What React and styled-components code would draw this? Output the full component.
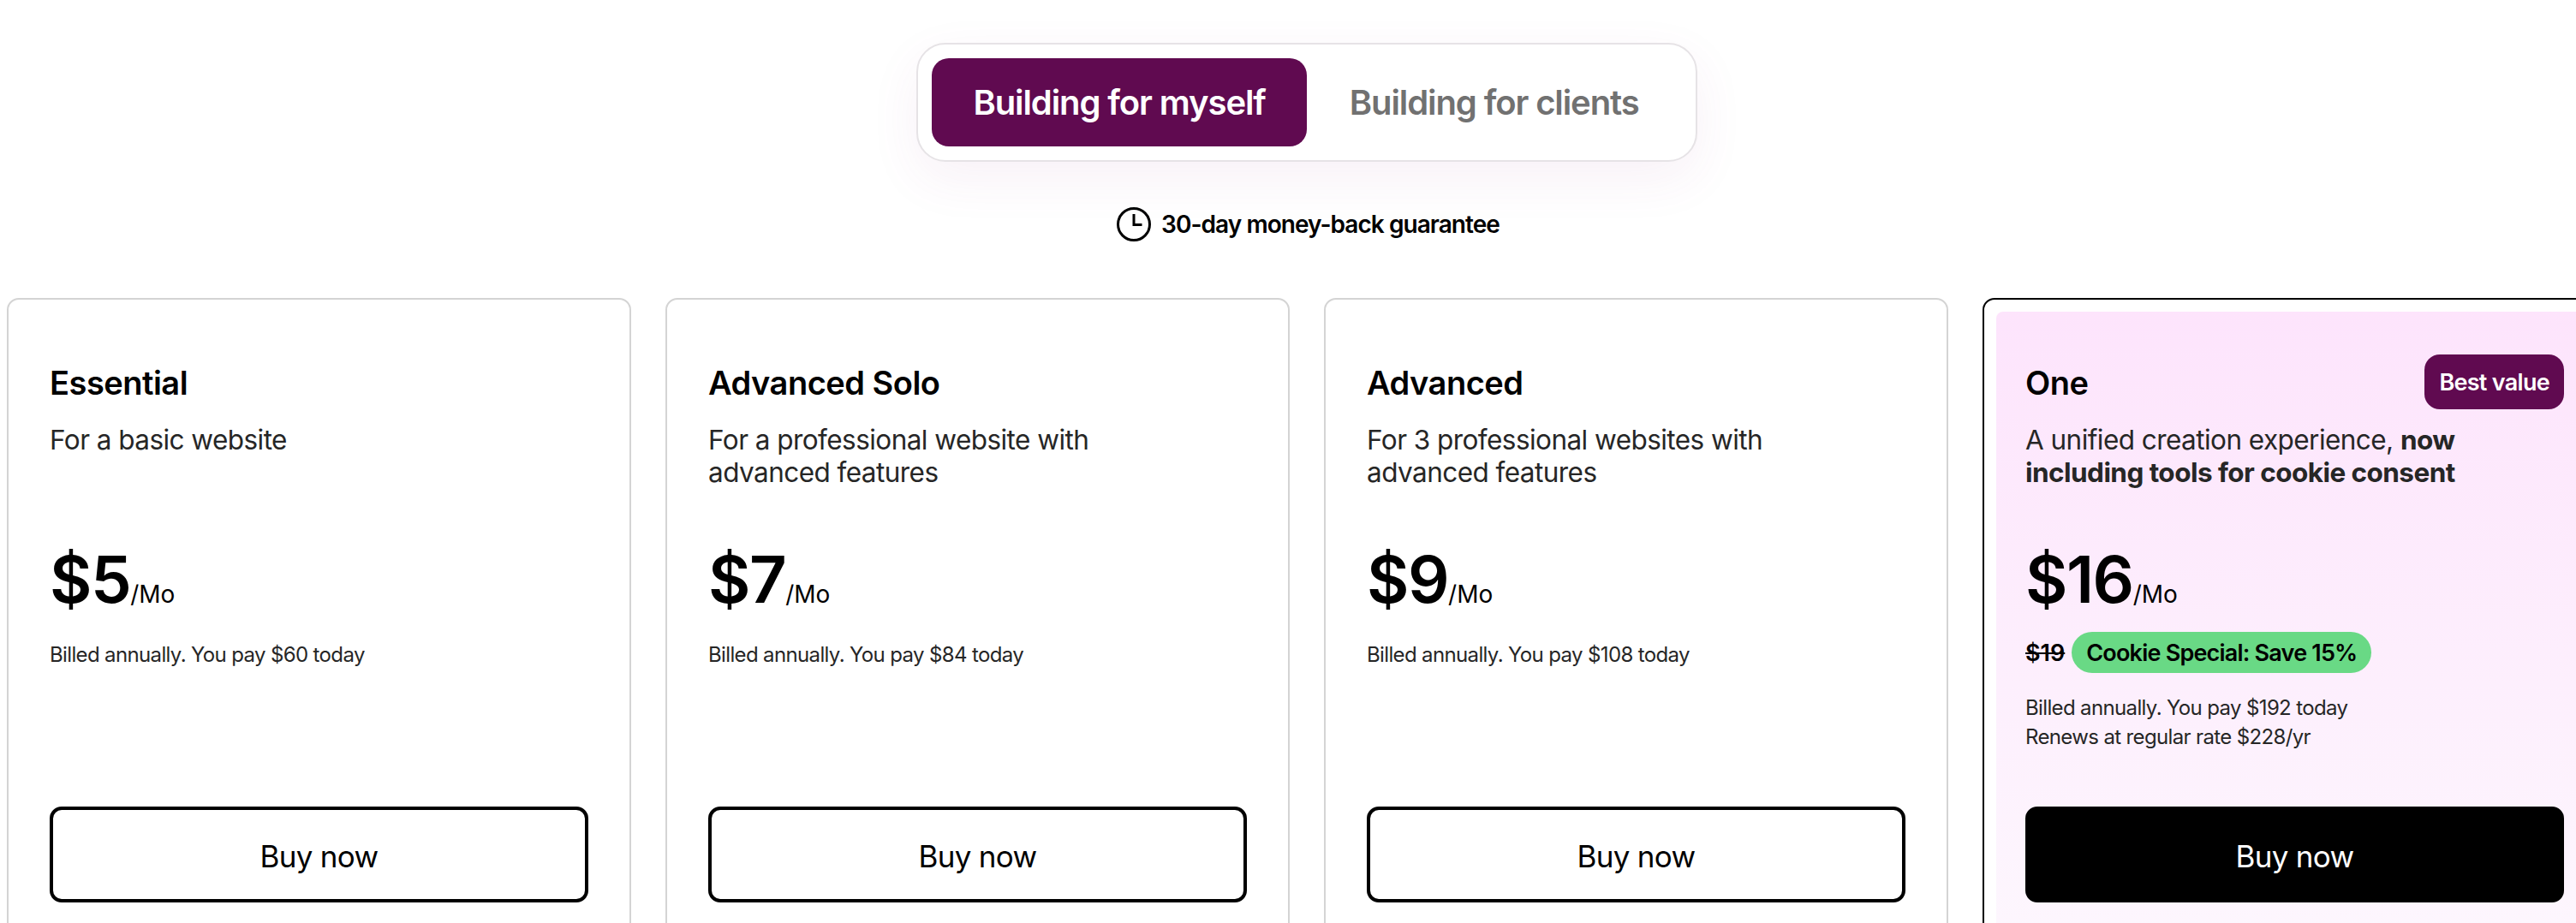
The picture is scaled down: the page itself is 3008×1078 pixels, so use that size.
import React from 'react';
import styled, { createGlobalStyle } from 'styled-components';

const GlobalStyle = createGlobalStyle`
    html, body {
        margin: 0;
        padding: 0;
        background: #fff;
    }
    * {
        box-sizing: border-box;
    }
`

const Page = styled.div`
    height: 100vh;
    overflow: hidden;
    padding: 50px 0 0 8px;
    font-family: Inter, "Liberation Sans", sans-serif;
    color: #000;
`

const Content = styled.div`
    width: 3036px;
    display: flex;
    flex-direction: column;
    align-items: center;
`

const Toggle = styled.div`
    display: flex;
    padding: 16px;
    border: 2px solid #e6e3e6;
    border-radius: 34px;
    background: #fff;
    box-shadow: 0 20px 60px rgba(150, 60, 140, 0.07);
`

const ToggleOption = styled.div`
    height: 103px;
    padding: 0 ${props => props.$active ? '48px' : '50px'};
    display: flex;
    align-items: center;
    border-radius: 20px;
    font-size: 40px;
    font-weight: 600;
    letter-spacing: -1.1px;
    background: ${props => props.$active ? '#600a50' : 'transparent'};
    color: ${props => props.$active ? '#fff' : '#717171'};
`

const Guarantee = styled.div`
    margin-top: 53px;
    padding-left: 3px;
    display: flex;
    align-items: center;
    gap: 12px;
    font-size: 28px;
    font-weight: 600;
    letter-spacing: -0.95px;
`

const Plans = styled.div`
    margin-top: 66px;
    width: 100%;
    display: grid;
    grid-template-columns: repeat(4, 729px);
    column-gap: 40px;
`

const Card = styled.div`
    height: 900px;
    padding: 14px;
    border: 2px solid ${props => props.$featured ? '#000' : '#d4d4d4'};
    border-radius: 14px;
`

const CardInner = styled.div`
    height: 100%;
    padding: 50px 34px 0;
    border-radius: 8px;
    background: ${props => props.$featured ? 'linear-gradient(180deg, #fde4fc 0%, #fdfafe 100%)' : 'transparent'};
`

const Summary = styled.div`
    height: 528px;
`

const CardHeader = styled.div`
    height: 64px;
    display: flex;
    align-items: center;
    justify-content: space-between;
`

const PlanName = styled.h2`
    margin: 0;
    padding-top: 2px;
    font-size: 38px;
    font-weight: 600;
    letter-spacing: -0.5px;
`

const Badge = styled.span`
    height: 64px;
    padding: 0 17px;
    display: flex;
    align-items: center;
    border-radius: 18px;
    background: #600a50;
    color: #fff;
    font-size: 27px;
    font-weight: 600;
    letter-spacing: -0.7px;
`

const Description = styled.p`
    margin: 17px 0 0;
    max-width: 520px;
    height: 76px;
    font-size: 31.5px;
    font-weight: 400;
    line-height: 38px;
    letter-spacing: -0.55px;
    color: #262626;
    strong {
        font-weight: 700;
    }
`

const PriceRow = styled.div`
    margin-top: 60px;
    display: flex;
    align-items: baseline;
`

const Price = styled.span`
    font-size: 76px;
    line-height: 90px;
    font-weight: 600;
    letter-spacing: -1.5px;
`

const Period = styled.span`
    font-size: 28px;
    font-weight: 400;
`

const OfferRow = styled.div`
    margin-top: 17px;
    display: flex;
    align-items: center;
    gap: 8px;
`

const OldPrice = styled.s`
    font-size: 27px;
    font-weight: 600;
`

const OfferPill = styled.span`
    height: 48px;
    padding: 0 17px;
    display: flex;
    align-items: center;
    border-radius: 24px;
    background: #69d985;
    font-size: 27px;
    font-weight: 600;
    letter-spacing: -0.8px;
`

const Billing = styled.p`
    margin: ${props => props.$offer ? '24px' : '27px'} 0 0;
    font-size: 24px;
    line-height: 34px;
    letter-spacing: -0.64px;
    color: #262626;
`

const BuyButton = styled.button`
    width: 100%;
    height: 112px;
    padding: 3px 0 0;
    display: block;
    border: 4px solid #000;
    border-radius: 14px;
    background: ${props => props.$featured ? '#000' : '#fff'};
    color: ${props => props.$featured ? '#fff' : '#000'};
    font-family: inherit;
    font-size: 35px;
    font-weight: 400;
    letter-spacing: -0.7px;
`

const plans = [
    { name: 'Essential', description: 'For a basic website', price: '$5', billing: ['Billed annually. You pay $60 today'] },
    { name: 'Advanced Solo', description: 'For a professional website with advanced features', price: '$7', billing: ['Billed annually. You pay $84 today'] },
    { name: 'Advanced', description: 'For 3 professional websites with advanced features', price: '$9', billing: ['Billed annually. You pay $108 today'] },
    {
        name: 'One',
        description: <>A unified creation experience, <strong>now including tools for cookie consent</strong></>,
        price: '$16',
        featured: true,
        billing: ['Billed annually. You pay $192 today', 'Renews at regular rate $228/yr'],
    },
]

const ClockIcon = () => (
    <svg width="40" height="40" viewBox="0 0 40 40" fill="none" stroke="#000" strokeWidth="3">
        <circle cx="20" cy="20" r="18.5" />
        <path d="M20 8v12.5h9.5" />
    </svg>
)

const App = () => (
    <Page>
        <GlobalStyle />
        <Content>
            <Toggle>
                <ToggleOption $active>Building for myself</ToggleOption>
                <ToggleOption>Building for clients</ToggleOption>
            </Toggle>
            <Guarantee>
                <ClockIcon />
                <span>30-day money-back guarantee</span>
            </Guarantee>
            <Plans>
                {plans.map(plan => (
                    <Card key={plan.name} $featured={plan.featured}>
                        <CardInner $featured={plan.featured}>
                            <Summary>
                                <CardHeader>
                                    <PlanName>{plan.name}</PlanName>
                                    {plan.featured && <Badge>Best value</Badge>}
                                </CardHeader>
                                <Description>{plan.description}</Description>
                                <PriceRow>
                                    <Price>{plan.price}</Price>
                                    <Period>/Mo</Period>
                                </PriceRow>
                                {plan.featured && (
                                    <OfferRow>
                                        <OldPrice>$19</OldPrice>
                                        <OfferPill>Cookie Special: Save 15%</OfferPill>
                                    </OfferRow>
                                )}
                                <Billing $offer={plan.featured}>
                                    {plan.billing.map(line => <React.Fragment key={line}>{line}<br /></React.Fragment>)}
                                </Billing>
                            </Summary>
                            <BuyButton $featured={plan.featured}>Buy now</BuyButton>
                        </CardInner>
                    </Card>
                ))}
            </Plans>
        </Content>
    </Page>
);

export default App;
